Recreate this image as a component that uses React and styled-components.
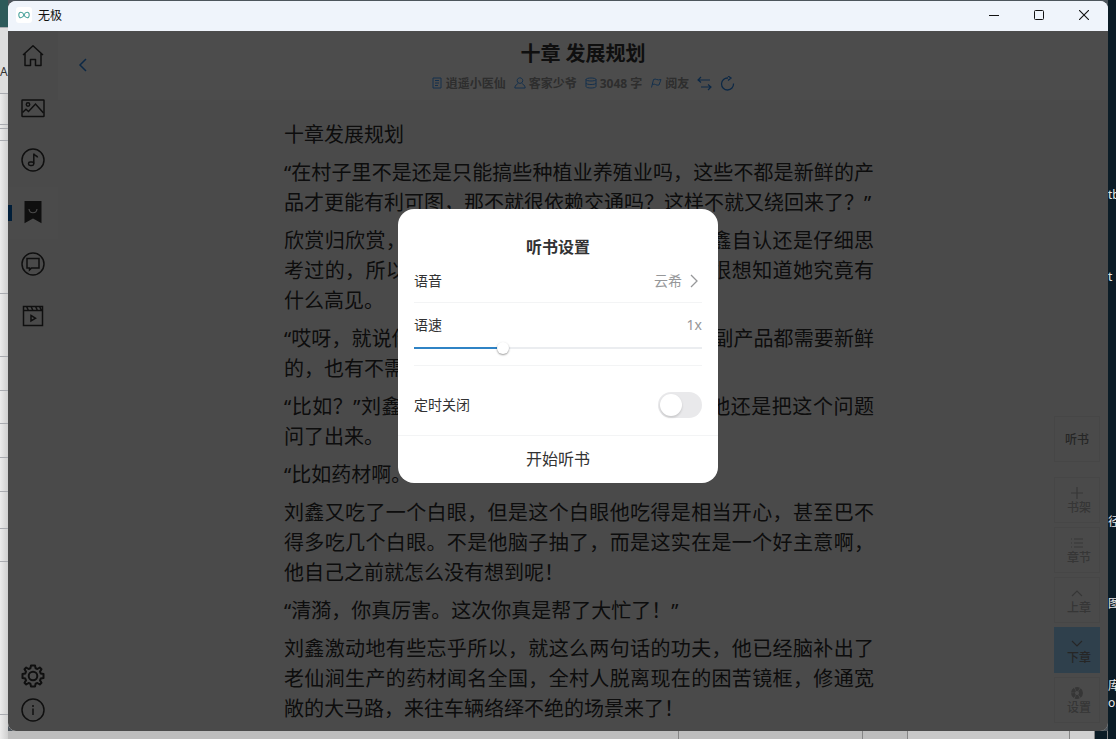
import React, { useState } from 'react'
import styled, { createGlobalStyle, css } from 'styled-components'

const GlobalStyle = createGlobalStyle`
* {
  box-sizing: border-box;
}
body {
  margin: 0;
  overflow: hidden;
  font-family: "Noto Sans", "Noto Sans CJK SC", sans-serif;
}
button {
  font-family: inherit;
  border: 0;
  padding: 0;
  background: none;
  cursor: pointer;
}
h1, h2, p {
  margin: 0;
}
`

const Desktop = styled.div`
  display: grid;
  grid-template-columns: 8px 1fr 8px;
  grid-template-rows: 1fr 8px;
  height: 100vh;
  background: #4d555c;
`

const LeftEdge = styled.div`
  display: flex;
  flex-direction: column;
  grid-row: 1 / 3;
  overflow: hidden;
  background: linear-gradient(90deg, #ececec, #cfcfcf);
`

const Strip = styled.div`
  flex: none;
  height: ${p => p.$h}px;
  border-bottom: 1px solid #a9abb0;
  background: ${p => p.$bg || 'transparent'};
  color: #333;
  font-size: 12px;
  line-height: 88px;
  overflow: hidden;
`

const RightEdge = styled.div`
  position: relative;
  overflow: hidden;
  grid-row: 1 / 3;
  grid-column: 3;
  background: #0b1c26;
  color: #e8e8e8;
  font-size: 12px;
  line-height: 16px;
`

const DesktopLabel = styled.span`
  position: absolute;
  top: ${p => p.$top}px;
  left: 0;
  white-space: nowrap;
`

const BottomEdge = styled.div`
  display: flex;
  grid-column: 2;
  grid-row: 2;
  background: #bdbdbd;
`

const BottomPart = styled.div`
  flex: ${p => p.$grow} 1 0;
  border-right: 1px solid #858585;
  background: ${p => p.$bg || 'transparent'};
`

const Window = styled.div`
  display: flex;
  flex-direction: column;
  grid-column: 2;
  grid-row: 1;
  min-width: 0;
  min-height: 0;
  margin-top: 1px;
  border-radius: 8px;
  overflow: hidden;
  background: #f9f9f9;
`

const TitleBar = styled.header`
  display: flex;
  flex: none;
  align-items: center;
  height: 30px;
  padding: 0 2px 2px 8px;
  background: #eff4fb;
  color: #111;
  font-size: 12px;
`

const Logo = styled.span`
  display: flex;
  align-items: center;
  justify-content: center;
  width: 16px;
  height: 16px;
  margin-right: 6px;
  border-radius: 3px;
  background: #fff;
`

const WindowButtons = styled.div`
  display: flex;
  margin-left: auto;
`

const WindowButton = styled.button`
  display: flex;
  align-items: center;
  justify-content: center;
  width: 45px;
  height: 28px;
  color: #111;
`

const Client = styled.div`
  position: relative;
  display: flex;
  flex: 1;
  min-height: 0;
`

const Sidebar = styled.nav`
  display: flex;
  flex-direction: column;
  flex: none;
  width: 50px;
  padding-bottom: 4px;
  background: #f7f7f7;
`

const NavButton = styled.button`
  display: flex;
  align-items: center;
  justify-content: center;
  height: ${p => (p.$small ? 34 : 52)}px;
  padding-bottom: ${p => (p.$small ? 0 : 2)}px;
  color: #333;
  ${p => p.$active && css`
    background: linear-gradient(#0067c0, #0067c0) 0 18px / 4px 16px no-repeat, #fbfbfb;
  `}
`

const Spacer = styled.div`
  flex: 1;
`

const Reader = styled.main`
  display: flex;
  flex-direction: column;
  flex: 1;
  min-width: 0;
`

const ReaderHead = styled.div`
  display: grid;
  grid-template-columns: 50px 1fr 50px;
  flex: none;
  height: 69px;
  background: #fff;
  color: #409eff;
`

const BackButton = styled.button`
  display: flex;
  align-items: center;
  justify-content: center;
  padding-bottom: 2px;
  color: #2a86e8;
`

const HeadCenter = styled.div`
  display: flex;
  flex-direction: column;
  align-items: center;
`

const ChapterTitle = styled.h1`
  margin-top: 8px;
  color: #333;
  font-size: 20px;
  font-weight: 700;
  line-height: 30px;
`

const Meta = styled.div`
  display: flex;
  align-items: center;
  gap: 8px;
  height: 28px;
  color: #999;
  font-size: 12px;
  font-weight: 700;
`

const MetaItem = styled.span`
  display: flex;
  align-items: center;
  gap: 3px;
  svg {
    color: #409eff;
  }
`

const MetaButton = styled.button`
  display: flex;
  color: #2a86e8;
`

const Article = styled.article`
  align-self: center;
  width: 590px;
  max-width: 100%;
  margin-top: 20px;
  margin-right: 8px;
  color: #2c2c2c;
  font-size: 20px;
  line-height: 30px;
  text-align: justify;
`

const Paragraph = styled.p`
  margin-bottom: 8px;
`

const Tools = styled.div`
  position: absolute;
  right: 8px;
  bottom: 8px;
  display: flex;
  flex-direction: column;
  gap: 4px;
`

const ToolButton = styled.button`
  display: flex;
  flex-direction: column;
  align-items: center;
  justify-content: center;
  width: 46px;
  height: 46px;
  padding-top: 2px;
  border: 1px solid ${p => (p.$blue ? '#9dd5ff' : '#eaeaea')};
  background: ${p => (p.$blue ? '#9dd5ff' : 'transparent')};
  color: ${p => (p.$strong || p.$blue ? '#808080' : '#b4b4b4')};
  font-size: 12px;
  font-weight: 500;
  line-height: 16px;
  margin-bottom: ${p => (p.$strong ? 11 : 0)}px;
  span {
    padding-left: ${p => (p.$strong ? 0 : 4)}px;
  }
`

const Overlay = styled.div`
  position: absolute;
  inset: 0;
  background: rgba(0, 0, 0, 0.7);
`

const Dialog = styled.section`
  position: absolute;
  top: 45%;
  left: 50%;
  width: 320px;
  transform: translate(-50%, -50%);
  border-radius: 16px;
  overflow: hidden;
  background: #fff;
  color: #323233;
`

const DialogTitle = styled.h2`
  padding: 26px 0 1px;
  font-size: 16px;
  font-weight: 700;
  line-height: 24px;
  text-align: center;
`

const Cell = styled.div`
  margin: 0 16px;
  border-bottom: ${p => (p.$last ? 0 : 1)}px solid #f3f4f5;
  padding: ${p => p.$pad};
`

const CellRow = styled.div`
  display: flex;
  align-items: center;
  justify-content: space-between;
  font-size: 14px;
  line-height: 24px;
`

const Voice = styled.button`
  display: flex;
  align-items: center;
  gap: 4px;
  color: #969799;
  font-size: 14px;
  line-height: 24px;
`

const Rate = styled.output`
  color: #969799;
`

const Slider = styled.input`
  display: block;
  width: 100%;
  height: 12px;
  margin: 5px 0 0;
  appearance: none;
  background: linear-gradient(#2f83c5, #2f83c5) 0 50% / 30% 2px no-repeat,
    linear-gradient(#ebedf0, #ebedf0) 0 50% / 100% 2px no-repeat;
  &::-webkit-slider-thumb {
    appearance: none;
    width: 12px;
    height: 12px;
    border-radius: 50%;
    background: #fff;
    box-shadow: 0 1px 2px rgba(0, 0, 0, 0.4);
  }
`

const Switch = styled.input`
  display: flex;
  align-items: center;
  width: 44px;
  height: 26px;
  margin: 0;
  padding: 0 2px;
  appearance: none;
  border-radius: 13px;
  background: ${p => (p.checked ? '#1989fa' : '#e9e9eb')};
  justify-content: ${p => (p.checked ? 'flex-end' : 'flex-start')};
  &::before {
    content: '';
    width: 22px;
    height: 22px;
    border-radius: 50%;
    background: #fff;
    box-shadow: 0 2px 2px rgba(0, 0, 0, 0.08), 0 1px 3px rgba(0, 0, 0, 0.08);
  }
`

const StartButton = styled.button`
  display: block;
  width: 100%;
  height: 48px;
  padding-bottom: 4px;
  border-top: 1px solid #f3f4f5;
  color: #323233;
  font-size: 16px;
`

const Icon = ({ size = 24, box = 24, w = 1.5, children }) => (
  <svg width={size} height={size} viewBox={`0 0 ${box} ${box}`} fill="none"
    stroke="currentColor" strokeWidth={w} aria-hidden="true">
    {children}
  </svg>
)

const HomeIcon = () => (
  <Icon>
    <path d="M2 11 12 1.8 22 11M4 9.5V21.5H9.5V15.5H14.5V21.5H20V9.5" strokeLinejoin="round" />
  </Icon>
)
const ImageIcon = () => (
  <Icon>
    <rect x="1" y="4" width="22" height="16.500" rx=".5" />
    <circle cx="7" cy="8.500" r="1.700" />
    <path d="M1.500 16.500 5 13.200 7.500 15.500 14.500 8 22.500 17" />
  </Icon>
)
const MusicIcon = () => (
  <Icon>
    <circle cx="12" cy="12" r="11" />
    <path d="M12.800 15.500V5.500C13 8 16.500 7.500 16.500 9.500" />
    <rect x="7.500" y="14" width="5.300" height="3.500" rx="1.700" />
  </Icon>
)
const BookmarkIcon = () => (
  <Icon>
    <path d="M3.500 1H20.500V23.200L12 18.500 3.500 23.200Z" fill="currentColor" stroke="none" />
    <path d="M8 9C8.600 14 15.400 14 16 9" stroke="#f7f7f7" strokeWidth="1.200" />
  </Icon>
)
const ChatIcon = () => (
  <Icon>
    <circle cx="12" cy="12" r="11" />
    <path d="M6 6.500H18V16H10.500L8.500 18V16H6Z" />
  </Icon>
)
const VideoIcon = () => (
  <Icon>
    <path d="M2.500 2.500H21.500V21.500H2.500ZM2.500 6.500H21.500M5.500 2.500 7.500 6.500M10 2.500 12 6.500M14.500 2.500 16.500 6.500M18.500 2.500 20.500 6.500" />
    <path d="M10 11.500 14.500 14.200 10 17Z" />
  </Icon>
)
const GearIcon = () => (
  <Icon w={2}>
    <circle cx="12" cy="12" r="4.300" />
    <path strokeLinejoin="round" d="M10 1.500H14L14.600 4.300 16.400 5 18.800 3.500 20.500 5.200 19 7.600 19.700 9.400 22.500 10V14L19.700 14.600 19 16.400 20.500 18.800 18.800 20.500 16.400 19 14.600 19.700 14 22.500H10L9.400 19.700 7.600 19 5.200 20.500 3.500 18.800 5 16.400 4.300 14.600 1.500 14V10L4.300 9.400 5 7.600 3.500 5.200 5.200 3.500 7.600 5 9.400 4.300Z" />
  </Icon>
)
const InfoIcon = () => (
  <Icon>
    <circle cx="12" cy="12" r="11" />
    <path d="M12 10.500V17M12 7V9" />
  </Icon>
)

const navItems = [
  ['首页', HomeIcon],
  ['图片', ImageIcon],
  ['音乐', MusicIcon],
  ['小说', BookmarkIcon],
  ['聊天', ChatIcon],
  ['视频', VideoIcon],
]

const metaItems = [
  ['逍遥小医仙', <path key="a" d="M2 1H10V11H2ZM4 3.500H8M4 6H8M4 8.500H7" />],
  ['客家少爷', <path key="b" d="M6 .8A2.800 2.800 0 1 1 5.900 .8M4.500 6C3 7.500 1 8 .8 11H11.200C11 8 9 7.500 7.500 6" />],
  ['3048 字', <path key="c" d="M1 2.500C1 .5 11 .5 11 2.500V9.500C11 11.500 1 11.500 1 9.500ZM1 2.500C1 4.500 11 4.500 11 2.500M1 6C1 8 11 8 11 6" />],
  ['阅友', <path key="d" d="M1.500 10.500 3.500 2.500C6 1 7 4 11 2.500L9 8C6 9 5 6 2.500 7.500" />],
]

const paragraphs = [
  '十章发展规划',
  '“在村子里不是还是只能搞些种植业养殖业吗，这些不都是新鲜的产品才更能有利可图，那不就很依赖交通吗？这样不就又绕回来了？”',
  '欣赏归欣赏，但是自己的规划还是要自己做，刘鑫自认还是仔细思考过的，所以对于清漪的这一番话，刘鑫倒是也很想知道她究竟有什么高见。',
  '“哎呀，就说你不懂吧，其实呢也并不是所有的农副产品都需要新鲜的，也有不需要新鲜的嘛。”',
  '“比如？”刘鑫虽然大概已经猜到了她的答案，但他还是把这个问题问了出来。',
  '“比如药材啊。”',
  '刘鑫又吃了一个白眼，但是这个白眼他吃得是相当开心，甚至巴不得多吃几个白眼。不是他脑子抽了，而是这实在是一个好主意啊，他自己之前就怎么没有想到呢！',
  '“清漪，你真厉害。这次你真是帮了大忙了！”',
  '刘鑫激动地有些忘乎所以，就这么两句话的功夫，他已经脑补出了老仙涧生产的药材闻名全国，全村人脱离现在的困苦镜框，修通宽敞的大马路，来往车辆络绎不绝的场景来了！',
]

const tools = [
  ['书架', <path key="a" d="M7 1V13M1 7H13" />],
  ['章节', <path key="b" d="M4 3H13M4 7H13M4 11H13M1 3H2M1 7H2M1 11H2" />],
  ['上章', <path key="c" d="M2 10 7 5 12 10" />],
  ['下章', <path key="d" d="M2 5 7 10 12 5" />],
  ['设置', <circle key="e" cx="7" cy="7" r="4" strokeWidth="4" strokeDasharray="3.600 .6" />],
]

const leftStrips = [
  [28, '#2d5a5a'],
  [66, '#dedede', 'Ac'],
  [31],
  [4],
  [12],
  [153],
  [63],
  [34],
  [33],
  [34],
  [34],
  [37],
  [33],
  [153],
]

const rightLabels = [
  [187, 'tb'],
  [269, 't'],
  [514, '径'],
  [596, '图'],
  [678, '库'],
  [695, 'o.'],
]

function App() {
  const [rate, setRate] = useState(30)
  const [timer, setTimer] = useState(false)

  return (
    <>
      <GlobalStyle />
      <Desktop lang="zh-CN">
        <LeftEdge>
          {leftStrips.map(([h, bg, text], i) => (
            <Strip key={i} $h={h} $bg={bg}>{text}</Strip>
          ))}
        </LeftEdge>

        <Window>
          <TitleBar>
            <Logo>
              <svg width="12" height="8" viewBox="0 0 12 8" fill="none" stroke="#4aa39c" strokeWidth="1.100">
                <path d="M6 4C4.500 .5 .8 .3 .8 4S4.500 7.500 6 4 11.200 .3 11.200 4 7.500 7.500 6 4Z" />
              </svg>
            </Logo>
            无极
            <WindowButtons>
              <WindowButton aria-label="最小化">
                <Icon size={10} box={10} w={1}><path d="M0 5.500H10" /></Icon>
              </WindowButton>
              <WindowButton aria-label="最大化">
                <Icon size={10} box={10} w={1}><rect x=".5" y=".5" width="9" height="9" rx="1" /></Icon>
              </WindowButton>
              <WindowButton aria-label="关闭">
                <Icon size={10} box={10} w={1.1}><path d="M0 0 10 10M10 0 0 10" /></Icon>
              </WindowButton>
            </WindowButtons>
          </TitleBar>

          <Client>
            <Sidebar>
              {navItems.map(([name, Glyph]) => (
                <NavButton key={name} aria-label={name} $active={name === '小说'}><Glyph /></NavButton>
              ))}
              <Spacer />
              <NavButton $small aria-label="设置"><GearIcon /></NavButton>
              <NavButton $small aria-label="关于"><InfoIcon /></NavButton>
            </Sidebar>

            <Reader>
              <ReaderHead>
                <BackButton aria-label="返回">
                  <Icon size={14} box={14}><path d="M10 1 4 7 10 13" /></Icon>
                </BackButton>
                <HeadCenter>
                  <ChapterTitle>十章 发展规划</ChapterTitle>
                  <Meta>
                    {metaItems.map(([text, path]) => (
                      <MetaItem key={text}>
                        <Icon size={12} box={12} w={1}>{path}</Icon>
                        {text}
                      </MetaItem>
                    ))}
                    <MetaButton aria-label="换源">
                      <Icon size={15} box={15} w={1.2}><path d="M4 1 1 4 4 6.500M1 4H13M11 8.500 14 11 11 14M14 11H4" /></Icon>
                    </MetaButton>
                    <MetaButton aria-label="刷新">
                      <Icon size={15} box={15} w={1.3}><path d="M8 2A6 6 0 1 0 13.500 7.500M8 0 11 2 8 4.500" /></Icon>
                    </MetaButton>
                  </Meta>
                </HeadCenter>
              </ReaderHead>
              <Article>
                {paragraphs.map(text => <Paragraph key={text}>{text}</Paragraph>)}
              </Article>
            </Reader>

            <Tools>
              <ToolButton $strong>听书</ToolButton>
              {tools.map(([name, path]) => (
                <ToolButton key={name} $blue={name === '下章'}>
                  <Icon size={14} box={14} w={1.2}>{path}</Icon>
                  <span>{name}</span>
                </ToolButton>
              ))}
            </Tools>

            <Overlay />
            <Dialog role="dialog" aria-labelledby="listen-title">
              <DialogTitle id="listen-title">听书设置</DialogTitle>
              <Cell $pad="9px 0">
                <CellRow>
                  <span id="voice-label">语音</span>
                  <Voice aria-describedby="voice-label">
                    云希
                    <Icon size={16} box={16} w={1.3}><path d="M5 2 11 8 5 14" /></Icon>
                  </Voice>
                </CellRow>
              </Cell>
              <Cell $pad="10px 0 11px">
                <CellRow>
                  <label htmlFor="rate">语速</label>
                  <Rate htmlFor="rate">1x</Rate>
                </CellRow>
                <Slider id="rate" type="range" value={rate} onChange={e => setRate(+e.target.value)} />
              </Cell>
              <Cell $last $pad="26px 0 17px">
                <CellRow>
                  <label htmlFor="timer">定时关闭</label>
                  <Switch id="timer" type="checkbox" role="switch" checked={timer}
                    onChange={e => setTimer(e.target.checked)} />
                </CellRow>
              </Cell>
              <StartButton>开始听书</StartButton>
            </Dialog>
          </Client>
        </Window>

        <RightEdge>
          {rightLabels.map(([top, text]) => (
            <DesktopLabel key={top} $top={top}>{text}</DesktopLabel>
          ))}
        </RightEdge>
        <BottomEdge>
          <BottomPart $grow={673} />
          <BottomPart $grow={184} />
          <BottomPart $grow={44} />
          <BottomPart $grow={162} $bg="#c8c8c8" />
          <BottomPart $grow={24} $bg="#d0d0d0" />
          <BottomPart $grow={12} $bg="#0b1c26" />
        </BottomEdge>
      </Desktop>
    </>
  )
}

export default App
